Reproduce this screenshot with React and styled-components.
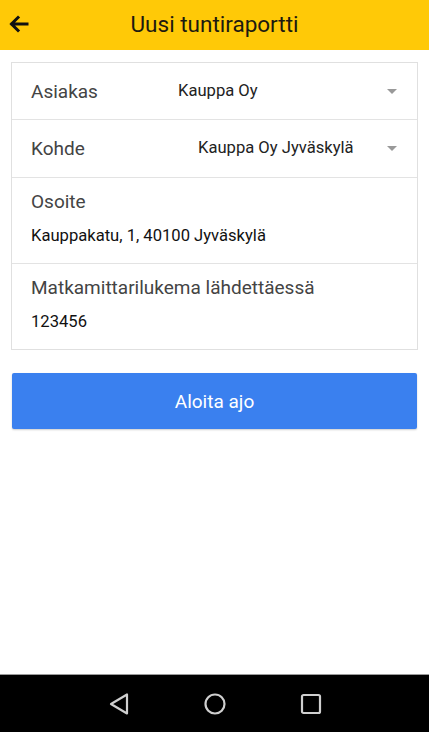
import React from 'react';
import styled, { createGlobalStyle } from 'styled-components';

const GlobalStyle = createGlobalStyle`
  html, body {
    margin: 0;
    padding: 0;
    background: #ffffff;
    font-family: Roboto, "Noto Sans", "Liberation Sans", sans-serif;
  }
  * { box-sizing: border-box; }
`;

const Screen = styled.div`
  display: flex;
  flex-direction: column;
  height: 732px;
  width: 429px;
  background: #fff;
`;

const Toolbar = styled.header`
  position: relative;
  display: flex;
  align-items: center;
  justify-content: center;
  height: 50px;
  background: #ffc907;
`;

const BackButton = styled.button`
  position: absolute;
  left: 8px;
  top: 14px;
  display: flex;
  padding: 0;
  border: none;
  background: none;
`;

const Title = styled.h1`
  margin: 0 0 2px;
  font-size: 22.5px;
  font-weight: 400;
  color: #1d1a10;
`;

const Content = styled.main`
  flex: 1;
  padding: 12px 11px 0;
`;

const Card = styled.section`
  border: 1px solid #e0e0e0;
`;

const SelectRow = styled.div`
  display: flex;
  align-items: center;
  height: ${({ h }) => h}px;
  padding: 0 20px 0 19px;
  border-bottom: 1px solid #e3e3e3;
`;

const Label = styled.span`
  font-size: 19px;
  color: #444;
  width: ${({ w }) => (w ? `${w}px` : 'auto')};
  flex-shrink: 0;
`;

const SelectValue = styled.span`
  flex: 1;
  margin-left: ${({ indent }) => indent}px;
  margin-top: -2px;
  font-size: 16.6px;
  color: #222;
`;

const Caret = styled.span`
  width: 0;
  height: 0;
  border-left: 5px solid transparent;
  border-right: 5px solid transparent;
  border-top: 5px solid #999;
`;

const InputRow = styled.div`
  display: flex;
  flex-direction: column;
  height: ${({ last }) => (last ? 85 : 86)}px;
  padding: 12px 19px 0;
  border-bottom: ${({ last }) => (last ? 'none' : '1px solid #e3e3e3')};
`;

const InputValue = styled.span`
  margin-top: 13px;
  font-size: 16.6px;
  color: #111;
`;

const PrimaryButton = styled.button`
  display: block;
  width: 405px;
  height: 56px;
  margin: 23px 0 0 1px;
  border: none;
  border-radius: 2px;
  background: #3a80ef;
  box-shadow: 0 1px 2px rgba(0, 0, 0, 0.2);
  color: #fff;
  font-family: inherit;
  font-size: 19px;
  font-weight: 400;
`;

const NavBar = styled.nav`
  display: flex;
  align-items: center;
  justify-content: center;
  gap: 73px;
  height: 58px;
  background: #000;
  border-top: 1px solid #9a9a9a;
`;

const NavIcon = styled.svg`
  display: block;
`;

export default function App() {
  return (
    <Screen>
      <GlobalStyle />
      <Toolbar>
        <BackButton aria-label="back">
          <svg width="22" height="20" viewBox="0 0 22 20">
            <path d="M19 10H4M10 3.5L3.5 10 10 16.5" stroke="#111" strokeWidth="3" fill="none" strokeLinecap="square" />
          </svg>
        </BackButton>
        <Title>Uusi tuntiraportti</Title>
      </Toolbar>
      <Content>
        <Card>
          <SelectRow h={57}>
            <Label w={130}>Asiakas</Label>
            <SelectValue indent={17}>Kauppa Oy</SelectValue>
            <Caret />
          </SelectRow>
          <SelectRow h={58}>
            <Label w={130}>Kohde</Label>
            <SelectValue indent={37}>Kauppa Oy Jyväskylä</SelectValue>
            <Caret />
          </SelectRow>
          <InputRow>
            <Label>Osoite</Label>
            <InputValue>Kauppakatu, 1, 40100 Jyväskylä</InputValue>
          </InputRow>
          <InputRow last>
            <Label>Matkamittarilukema lähdettäessä</Label>
            <InputValue>123456</InputValue>
          </InputRow>
        </Card>
        <PrimaryButton>Aloita ajo</PrimaryButton>
      </Content>
      <NavBar>
        <NavIcon width="22" height="24" viewBox="0 0 22 24">
          <path d="M19 2.5V21.5L3 12Z" stroke="#cfcfcf" strokeWidth="2.2" fill="none" strokeLinejoin="round" />
        </NavIcon>
        <NavIcon width="24" height="24" viewBox="0 0 24 24">
          <circle cx="12" cy="12" r="9.5" stroke="#cfcfcf" strokeWidth="2.2" fill="none" />
        </NavIcon>
        <NavIcon width="22" height="22" viewBox="0 0 22 22">
          <rect x="2" y="2" width="18" height="18" rx="1.5" stroke="#cfcfcf" strokeWidth="2.2" fill="none" />
        </NavIcon>
      </NavBar>
    </Screen>
  );
}
